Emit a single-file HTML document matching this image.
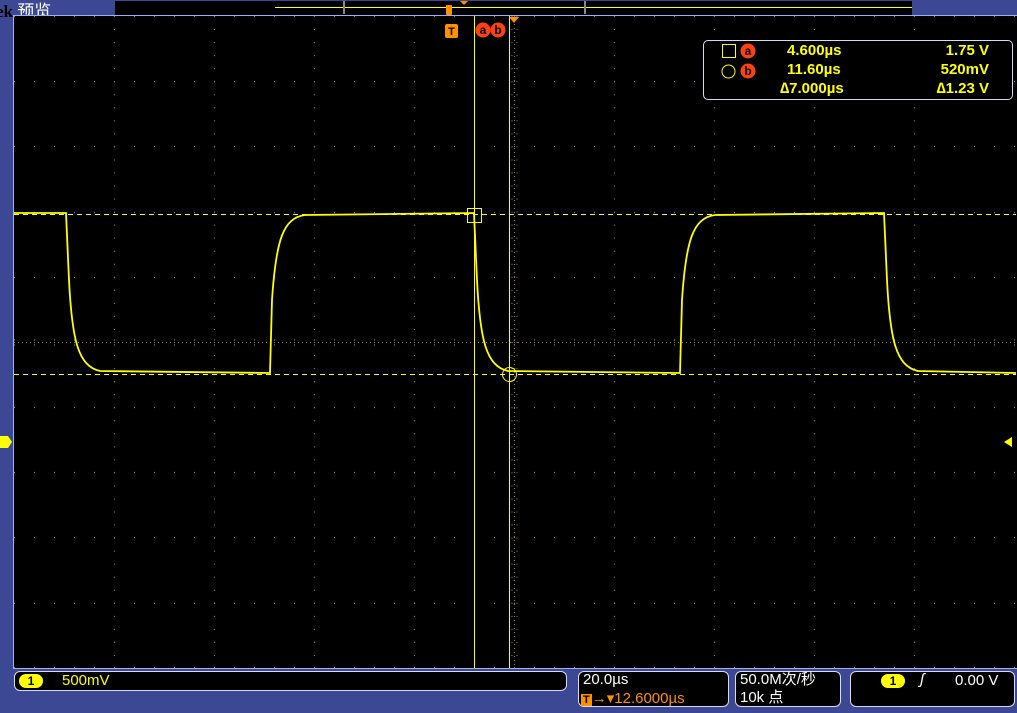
<!DOCTYPE html>
<html><head><meta charset="utf-8"><style>
html,body{margin:0;padding:0;background:#3c4894;width:1017px;height:713px;overflow:hidden;font-family:"Liberation Sans","Noto Sans CJK SC",sans-serif}
.t{position:absolute;white-space:nowrap}
.box{position:absolute;background:#000;border:1px solid #d8dcf0;border-radius:6px;box-sizing:border-box}
</style></head><body>
<div class="t" style="left:-4px;top:-3px;color:#fff;font-size:17px;font-family:'Liberation Serif','Noto Sans CJK SC',serif"><b style="color:#000;font-family:'Liberation Serif',serif">ek</b> <span style="font-family:'Noto Sans CJK SC',sans-serif">预览</span></div>
<svg width="1017" height="713" style="position:absolute;left:0;top:0" xmlns="http://www.w3.org/2000/svg">
<rect x="115" y="1" width="797" height="14" fill="#000"/>
<line x1="275" y1="7.5" x2="912" y2="7.5" stroke="#ffff00" stroke-width="1"/>
<rect x="343" y="1" width="2" height="13" fill="#888"/>
<rect x="584" y="1" width="2" height="13" fill="#888"/>
<rect x="446" y="5" width="6" height="10" fill="#ff9000" rx="1"/>
<polygon points="460,1 468,1 464,5" fill="#ff9000"/>
<rect x="13" y="15" width="1004" height="654" fill="#000"/>
<line x1="13.5" y1="15" x2="13.5" y2="669" stroke="#9ab0ff"/>
<line x1="13" y1="15.5" x2="1017" y2="15.5" stroke="#9ab0ff"/>
<line x1="13" y1="668.5" x2="1017" y2="668.5" stroke="#9ab0ff"/>
<g stroke="#8a7a58" stroke-width="1.2">
<g stroke-dasharray="1 12.04">
<line x1="114.5" y1="16" x2="114.5" y2="668"/><line x1="214.5" y1="16" x2="214.5" y2="668"/><line x1="314.5" y1="16" x2="314.5" y2="668"/><line x1="414.5" y1="16" x2="414.5" y2="668"/><line x1="614.5" y1="16" x2="614.5" y2="668"/><line x1="714.5" y1="16" x2="714.5" y2="668"/><line x1="814.5" y1="16" x2="814.5" y2="668"/><line x1="914.5" y1="16" x2="914.5" y2="668"/>
</g>
<g stroke-dasharray="1 19">
<line x1="14" y1="16.5" x2="1016" y2="16.5"/><line x1="14" y1="81.5" x2="1016" y2="81.5"/><line x1="14" y1="146.5" x2="1016" y2="146.5"/><line x1="14" y1="212.5" x2="1016" y2="212.5"/><line x1="14" y1="277.5" x2="1016" y2="277.5"/><line x1="14" y1="407.5" x2="1016" y2="407.5"/><line x1="14" y1="472.5" x2="1016" y2="472.5"/><line x1="14" y1="537.5" x2="1016" y2="537.5"/><line x1="14" y1="603.5" x2="1016" y2="603.5"/><line x1="14" y1="667.5" x2="1016" y2="667.5"/>
</g>
<line x1="14" y1="342.5" x2="1016" y2="342.5" stroke-dasharray="1 3"/>
<line x1="514.5" y1="16" x2="514.5" y2="668" stroke-dasharray="1 3"/>
<g stroke-dasharray="1 12.04">
<line x1="512" y1="16" x2="512" y2="668"/><line x1="517" y1="16" x2="517" y2="668"/>
</g>
<g stroke-dasharray="1 19">
<line x1="14" y1="340" x2="1016" y2="340"/><line x1="14" y1="345" x2="1016" y2="345"/>
</g>
</g>
<g stroke="#ffff00" stroke-width="1" fill="none">
<line x1="14" y1="214.5" x2="1016" y2="214.5" stroke-dasharray="5 4"/>
<line x1="14" y1="374.5" x2="1016" y2="374.5" stroke-dasharray="5 4"/>
<line x1="474.5" y1="16" x2="474.5" y2="668"/>
<line x1="509.5" y1="16" x2="509.5" y2="668"/>
<rect x="467.5" y="208.5" width="14" height="14"/>
<circle cx="509.5" cy="374.5" r="7"/>
<path stroke-width="1.8" d="M14,213 L66,213 L69,280 C72,340 78,366 100,371 L270,373 L272,300 C276,240 283,218 305,215 L474,213 L477,280 C480,340 486,366 508,371 L680,373 L682,300 C686,240 693,218 715,215 L884,213 L887,280 C890,340 896,366 918,371 L1016,373"/>
</g>
<rect x="445" y="24" width="13" height="14" rx="2" fill="#ff9000"/>
<text x="451.5" y="35" font-size="11" font-weight="bold" text-anchor="middle" fill="#000" font-family="Liberation Sans">T</text>
<circle cx="483" cy="30" r="7.5" fill="#ff4010"/><circle cx="498" cy="30" r="7.5" fill="#ff4010"/>
<text x="483" y="34" font-size="12" font-weight="bold" text-anchor="middle" fill="#000" font-family="Liberation Sans">a</text>
<text x="498" y="34" font-size="12" font-weight="bold" text-anchor="middle" fill="#000" font-family="Liberation Sans">b</text>
<polygon points="509,17 519,17 514,23" fill="#ff9000"/>
<polygon points="0,436 8,436 12,442 8,448 0,448" fill="#ffff00"/>
<polygon points="1012,437 1004,442 1012,447" fill="#ffff00"/>
</svg>
<div class="box" style="left:703px;top:40px;width:310px;height:60px;border-radius:5px"></div>
<svg width="1017" height="713" style="position:absolute;left:0;top:0">
<rect x="722.5" y="44.5" width="13" height="13" fill="none" stroke="#ffff00"/>
<circle cx="728.5" cy="71.5" r="6.5" fill="none" stroke="#ffff00"/>
<circle cx="748" cy="51" r="7.5" fill="#ff4010"/><circle cx="748" cy="71" r="7.5" fill="#ff4010"/>
<text x="748" y="55" font-size="12" font-weight="bold" text-anchor="middle" fill="#000" font-family="Liberation Sans">a</text>
<text x="748" y="75" font-size="12" font-weight="bold" text-anchor="middle" fill="#000" font-family="Liberation Sans">b</text>
</svg>
<div class="t" style="left:787px;top:41px;color:#ffff00;font-size:15px;font-weight:bold;line-height:19px">4.600µs<br>11.60µs</div>
<div class="t" style="left:780px;top:79px;color:#ffff00;font-size:15px;font-weight:bold;line-height:19px">∆7.000µs</div>
<div class="t" style="right:28px;top:41px;color:#ffff00;font-size:15px;font-weight:bold;line-height:19px;text-align:right">1.75 V<br>520mV<br>∆1.23 V</div>
<div class="box" style="left:14px;top:671px;width:553px;height:20px"></div>
<div class="t" style="left:19px;top:674px;width:24px;height:14px;background:#ffff00;border-radius:7px;font-size:12px;text-align:center;line-height:14px;font-weight:bold">1</div>
<div class="t" style="left:62px;top:672px;color:#ffff00;font-size:15px">500mV</div>
<div class="box" style="left:578px;top:671px;width:151px;height:36px"></div>
<div class="t" style="left:583px;top:671px;color:#fff;font-size:15px">20.0µs</div>
<div class="t" style="left:581px;top:689px;color:#ff9000;font-size:15px"><span style="background:#ff9000;color:#000;font-size:11px;font-weight:bold;padding:0 2px">T</span>→▾12.6000µs</div>
<div class="box" style="left:735px;top:671px;width:106px;height:36px"></div>
<div class="t" style="left:740px;top:671px;color:#fff;font-size:15px;line-height:18px">50.0M次/秒<br>10k 点</div>
<div class="box" style="left:850px;top:671px;width:165px;height:36px"></div>
<div class="t" style="left:881px;top:674px;width:24px;height:14px;background:#ffff00;border-radius:7px;font-size:12px;text-align:center;line-height:14px;font-weight:bold">1</div>
<div class="t" style="left:920px;top:671px;color:#fff;font-size:15px;font-style:italic">ʃ</div>
<div class="t" style="left:955px;top:672px;color:#fff;font-size:15px">0.00 V</div>
</body></html>
